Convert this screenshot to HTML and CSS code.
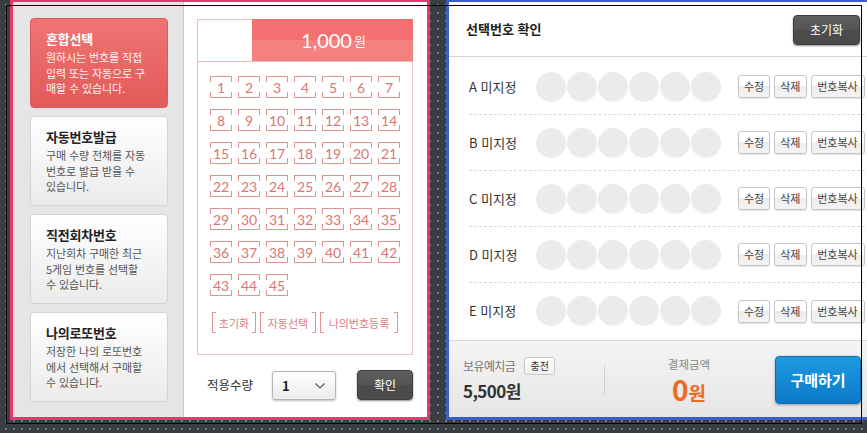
FILE: index.html
```html
<!DOCTYPE html>
<html lang="ko">
<head>
<meta charset="utf-8">
<title>로또 번호 선택</title>
<link rel="stylesheet" href="styles.css">
</head>
<body>
<div class="stage">
  <section class="panel panel-left">
    <aside class="sidebar">
      <div class="mode-card mode-active">
        <h3 class="mode-title">혼합선택</h3>
        <p class="mode-desc">원하시는 번호를 직접<br>입력 또는 자동으로 구<br>매할 수 있습니다.</p>
      </div>
      <div class="mode-card">
        <h3 class="mode-title">자동번호발급</h3>
        <p class="mode-desc">구매 수량 전체를 자동<br>번호로 발급 받을 수<br>있습니다.</p>
      </div>
      <div class="mode-card">
        <h3 class="mode-title">직전회차번호</h3>
        <p class="mode-desc">지난회차 구매한 최근<br>5게임 번호를 선택할<br>수 있습니다.</p>
      </div>
      <div class="mode-card">
        <h3 class="mode-title">나의로또번호</h3>
        <p class="mode-desc">저장한 나의 로또번호<br>에서 선택해서 구매할<br>수 있습니다.</p>
      </div>
    </aside>
    <div class="picker">
      <div class="ticket">
        <div class="ticket-head">
          <div class="ticket-blank"></div>
          <div class="ticket-price"><span class="price-num">1,000</span><span class="price-unit">원</span></div>
        </div>
        <div class="ticket-body">
          <div class="num-grid">
            <span class="cell">1</span><span class="cell">2</span><span class="cell">3</span><span class="cell">4</span><span class="cell">5</span><span class="cell">6</span><span class="cell">7</span>
            <span class="cell">8</span><span class="cell">9</span><span class="cell">10</span><span class="cell">11</span><span class="cell">12</span><span class="cell">13</span><span class="cell">14</span>
            <span class="cell">15</span><span class="cell">16</span><span class="cell">17</span><span class="cell">18</span><span class="cell">19</span><span class="cell">20</span><span class="cell">21</span>
            <span class="cell">22</span><span class="cell">23</span><span class="cell">24</span><span class="cell">25</span><span class="cell">26</span><span class="cell">27</span><span class="cell">28</span>
            <span class="cell">29</span><span class="cell">30</span><span class="cell">31</span><span class="cell">32</span><span class="cell">33</span><span class="cell">34</span><span class="cell">35</span>
            <span class="cell">36</span><span class="cell">37</span><span class="cell">38</span><span class="cell">39</span><span class="cell">40</span><span class="cell">41</span><span class="cell">42</span>
            <span class="cell">43</span><span class="cell">44</span><span class="cell">45</span>
          </div>
          <div class="ticket-actions">
            <span class="bracket-btn btn-reset">초기화</span>
            <span class="bracket-btn btn-auto">자동선택</span>
            <span class="bracket-btn btn-mine">나의번호등록</span>
          </div>
        </div>
      </div>
      <div class="apply-row">
        <span class="apply-label">적용수량</span>
        <div class="qty-select">
          <span class="qty-value">1</span>
          <svg class="qty-arrow" width="10" height="6" viewBox="0 0 10 6"><polyline points="0.5,0.5 5,5 9.5,0.5" fill="none" stroke="#555" stroke-width="1.2"/></svg>
        </div>
        <button class="dark-btn apply-btn">확인</button>
      </div>
    </div>
  </section>

  <section class="panel panel-right">
    <header class="sel-head">
      <h2 class="sel-title">선택번호 확인</h2>
      <button class="dark-btn head-reset">초기화</button>
    </header>
    <div class="sel-rows">
      <div class="sel-row">
        <span class="row-label">A 미지정</span>
        <div class="balls"><i></i><i></i><i></i><i></i><i></i><i></i></div>
        <div class="row-btns"><button class="mini-btn">수정</button><button class="mini-btn">삭제</button><button class="mini-btn">번호복사</button></div>
      </div>
      <div class="sel-row">
        <span class="row-label">B 미지정</span>
        <div class="balls"><i></i><i></i><i></i><i></i><i></i><i></i></div>
        <div class="row-btns"><button class="mini-btn">수정</button><button class="mini-btn">삭제</button><button class="mini-btn">번호복사</button></div>
      </div>
      <div class="sel-row">
        <span class="row-label">C 미지정</span>
        <div class="balls"><i></i><i></i><i></i><i></i><i></i><i></i></div>
        <div class="row-btns"><button class="mini-btn">수정</button><button class="mini-btn">삭제</button><button class="mini-btn">번호복사</button></div>
      </div>
      <div class="sel-row">
        <span class="row-label">D 미지정</span>
        <div class="balls"><i></i><i></i><i></i><i></i><i></i><i></i></div>
        <div class="row-btns"><button class="mini-btn">수정</button><button class="mini-btn">삭제</button><button class="mini-btn">번호복사</button></div>
      </div>
      <div class="sel-row">
        <span class="row-label">E 미지정</span>
        <div class="balls"><i></i><i></i><i></i><i></i><i></i><i></i></div>
        <div class="row-btns"><button class="mini-btn">수정</button><button class="mini-btn">삭제</button><button class="mini-btn">번호복사</button></div>
      </div>
    </div>
    <footer class="pay-bar">
      <div class="deposit">
        <div class="deposit-top"><span class="deposit-label">보유예치금</span><button class="charge-btn">충전</button></div>
        <div class="deposit-amount">5,500원</div>
      </div>
      <div class="pay-sep"></div>
      <div class="pay-total">
        <div class="pay-label">결제금액</div>
        <div class="pay-amount"><span class="pay-num">0</span><span class="pay-unit">원</span></div>
      </div>
      <button class="buy-btn">구매하기</button>
    </footer>
  </section>
</div>
<div class="frame-outline"></div>
</body>
</html>
```

FILE: styles.css
```css
* { box-sizing: border-box; }
html, body { margin: 0; padding: 0; }
body {
  width: 867px;
  height: 433px;
  overflow: hidden;
  position: relative;
  font-family: "Noto Sans CJK KR", "Noto Sans", sans-serif;
  background-color: #393c40;
  background-image: radial-gradient(circle, #74777b 0.9px, rgba(0,0,0,0) 1.4px);
  background-size: 8px 8px;
  background-position: 2px 1px;
}
h2, h3, p { margin: 0; }
button { font-family: inherit; cursor: pointer; padding: 0; }

.stage {
  display: flex;
  align-items: flex-start;
  padding-left: 10px;
  margin-top: -1px;
  gap: 16px;
}
.panel {
  height: 421px;
  flex-shrink: 0;
  border: 3px solid;
}
.panel-left {
  width: 420px;
  border-color: #e6376f;
  display: flex;
  background: #fff;
}
.panel-right {
  width: 437px;
  border-color: #3b5ec6;
  background: #fff;
  display: flex;
  flex-direction: column;
}

/* sidebar */
.sidebar {
  width: 171px;
  flex-shrink: 0;
  background: #e5e5e5;
  border-right: 1px solid #c9c9c9;
  padding: 16px 0 0 17px;
  display: flex;
  flex-direction: column;
  gap: 8px;
}
.mode-card {
  width: 138px;
  height: 90px;
  border: 1px solid #d3d3d3;
  border-radius: 4px;
  background: linear-gradient(#ffffff, #ebebeb);
  padding: 11px 8px 0 15px;
}
.mode-title {
  font-size: 13px;
  line-height: 17px;
  font-weight: 700;
  color: #222;
  letter-spacing: -0.2px;
}
.mode-desc {
  margin-top: 3px;
  font-size: 11px;
  line-height: 15.5px;
  color: #555;
  white-space: nowrap;
  letter-spacing: -0.1px;
}
.mode-active {
  border-color: #dd5a5a;
  background: linear-gradient(#f07474, #e25a5a);
}
.mode-active .mode-title { color: #fff; }
.mode-active .mode-desc { color: #fff3f3; }

/* picker */
.picker {
  flex: 1;
  padding: 17px 14px 0 13px;
  display: flex;
  flex-direction: column;
}
.ticket {
  width: 216px;
  border: 1px solid #eac3c3;
}
.ticket-head {
  display: flex;
  height: 43px;
  margin-top: -1px;
  margin-right: -1px;
  border-bottom: 1px solid #eab9b9;
}
.ticket-blank {
  width: 54px;
  border-top: 1px solid #eac3c3;
}
.ticket-price {
  flex: 1;
  background: linear-gradient(#f27070 0, #f27070 50%, #f48080 50%, #f48080 100%);
  color: #fff;
  display: flex;
  align-items: center;
  justify-content: center;
  padding-left: 2px;
}
.price-num {
  font-family: Lato, "Liberation Sans", sans-serif;
  font-size: 20px;
  line-height: 24px;
}
.price-unit {
  font-size: 13px;
  line-height: 20px;
  margin-left: 2px;
  margin-top: 2px;
}
.ticket-body {
  padding: 14px 12px 21px 12px;
}
.num-grid {
  display: grid;
  grid-template-columns: repeat(7, 22px);
  column-gap: 6px;
  row-gap: 11px;
}
.cell {
  position: relative;
  width: 22px;
  height: 22px;
  display: flex;
  align-items: center;
  justify-content: center;
  font-family: Lato, "Liberation Sans", sans-serif;
  font-size: 14px;
  line-height: 14px;
  color: #d97676;
  padding-top: 1px;
}
.cell::before, .cell::after {
  content: "";
  position: absolute;
  left: 0;
  right: 0;
  height: 5px;
  border: 1px solid #df9494;
}
.cell::before { top: 0; border-bottom: none; }
.cell::after { bottom: 0; border-top: none; }

.ticket-actions {
  display: flex;
  gap: 4px;
  margin-top: 16px;
  padding-left: 2px;
}
.bracket-btn {
  position: relative;
  height: 21px;
  display: flex;
  align-items: center;
  justify-content: center;
  font-size: 11px;
  line-height: 14px;
  color: #d98080;
}
.bracket-btn::before, .bracket-btn::after {
  content: "";
  position: absolute;
  top: 0;
  bottom: 0;
  width: 3px;
  border: 1px solid #df9494;
}
.bracket-btn::before { left: 0; border-right: none; }
.bracket-btn::after { right: 0; border-left: none; }
.btn-reset { width: 44px; }
.btn-auto { width: 56px; }
.btn-mine { width: 78px; }

.apply-row {
  display: flex;
  align-items: center;
  margin-top: 15px;
  height: 30px;
}
.apply-label {
  margin-left: 10px;
  width: 50px;
  font-size: 12.5px;
  line-height: 16px;
  color: #333;
  white-space: nowrap;
}
.qty-select {
  margin-left: 15px;
  width: 64px;
  height: 29px;
  margin-top: 1px;
  border: 1px solid #b4b4b4;
  border-radius: 3px;
  background: linear-gradient(#ffffff, #ececec);
  box-shadow: 0 1px 2px rgba(0,0,0,0.25);
  display: flex;
  align-items: center;
  justify-content: space-between;
  padding: 0 10px 0 9px;
}
.qty-value {
  font-size: 13px;
  font-weight: 700;
  color: #222;
  line-height: 16px;
}
.qty-arrow { display: block; }
.dark-btn {
  border: 1px solid #3d3d3d;
  border-radius: 4px;
  color: #fff;
  background: linear-gradient(#5e5e5e 0, #555 48%, #4c4c4c 52%, #4a4a4a 100%);
  box-shadow: 0 1px 2px rgba(0,0,0,0.45);
  font-size: 12px;
  line-height: 14px;
}
.apply-btn {
  margin-left: 21px;
  width: 56px;
  height: 30px;
}

/* right panel */
.sel-head {
  height: 55px;
  flex-shrink: 0;
  border-bottom: 1px solid #d4d4d4;
  display: flex;
  align-items: center;
  justify-content: space-between;
  padding: 0 20px 0 17px;
}
.sel-title {
  font-size: 13px;
  line-height: 18px;
  font-weight: 700;
  color: #222;
}
.head-reset {
  width: 67px;
  height: 30px;
  margin-top: 1px;
  font-size: 12px;
}
.sel-rows {
  padding: 2px 0 0 0;
  height: 283px;
  flex-shrink: 0;
}
.sel-row {
  height: 56px;
  margin: 0 0 0 20px;
  border-bottom: 1px dashed #dadada;
  display: flex;
  align-items: center;
}
.sel-row:last-child { border-bottom: none; }
.row-label {
  width: 67px;
  font-size: 13px;
  line-height: 16px;
  color: #333;
  white-space: nowrap;
}
.balls {
  display: flex;
  gap: 1px;
}
.balls i {
  display: block;
  width: 30px;
  height: 30px;
  border-radius: 50%;
  background: #ebebeb;
}
.row-btns {
  margin-left: 17px;
  display: flex;
  gap: 4px;
}
.mini-btn {
  height: 23px;
  border: 1px solid #c6c6c6;
  border-radius: 3px;
  background: linear-gradient(#ffffff 0, #ffffff 50%, #ececec 50%, #f4f4f4 100%);
  box-shadow: 0 1px 1px rgba(0,0,0,0.12);
  font-size: 11px;
  line-height: 13px;
  color: #444;
  padding: 0 5px;
  min-width: 31px;
}
.row-btns .mini-btn:last-child { width: 54px; padding: 0; }

.pay-bar {
  flex: 1;
  border-top: 1px solid #d6d6d6;
  background: linear-gradient(#f4f4f4, #e6e6e6);
  display: flex;
  align-items: center;
  padding: 0 0 0 14px;
}
.deposit {
  width: 141px;
  display: flex;
  flex-direction: column;
  margin-top: -1px;
}
.deposit-top {
  display: flex;
  align-items: center;
  height: 18px;
}
.deposit-label {
  font-size: 12px;
  letter-spacing: -0.6px;
  line-height: 16px;
  color: #777;
}
.charge-btn {
  margin-left: 9px;
  width: 31px;
  height: 18px;
  border: 1px solid #c6c6c6;
  border-radius: 3px;
  background: linear-gradient(#fff, #f0f0f0);
  font-size: 10px;
  line-height: 12px;
  color: #333;
}
.deposit-amount {
  margin-top: 6px;
  font-size: 17px;
  line-height: 20px;
  font-weight: 700;
  color: #333;
  letter-spacing: -0.6px;
}
.pay-sep {
  width: 1px;
  height: 30px;
  background: #cfcfcf;
  margin-top: 2px;
}
.pay-total {
  flex: 1;
  display: flex;
  flex-direction: column;
  align-items: center;
  margin-left: -2px;
}
.pay-label {
  font-size: 11.5px;
  line-height: 15px;
  color: #888;
}
.pay-amount {
  color: #f06a1e;
  font-weight: 700;
  display: flex;
  align-items: baseline;
  margin-top: 4px;
  height: 26px;
}
.pay-num { font-size: 28px; line-height: 26px; }
.pay-unit { font-size: 19px; line-height: 20px; }
.buy-btn {
  width: 86px;
  height: 48px;
  margin-right: 19px;
  margin-top: 2px;
  border: 1px solid #0b6fb6;
  border-radius: 4px;
  background: linear-gradient(#1e9ae0, #0c7ac8);
  box-shadow: 0 1px 3px rgba(0,0,0,0.35);
  color: #fff;
  font-size: 15px;
  line-height: 18px;
  font-weight: 700;
}

.frame-outline {
  position: absolute;
  left: 6px;
  top: 5px;
  width: 856px;
  height: 419px;
  border: 1px solid #000;
  pointer-events: none;
}
```
